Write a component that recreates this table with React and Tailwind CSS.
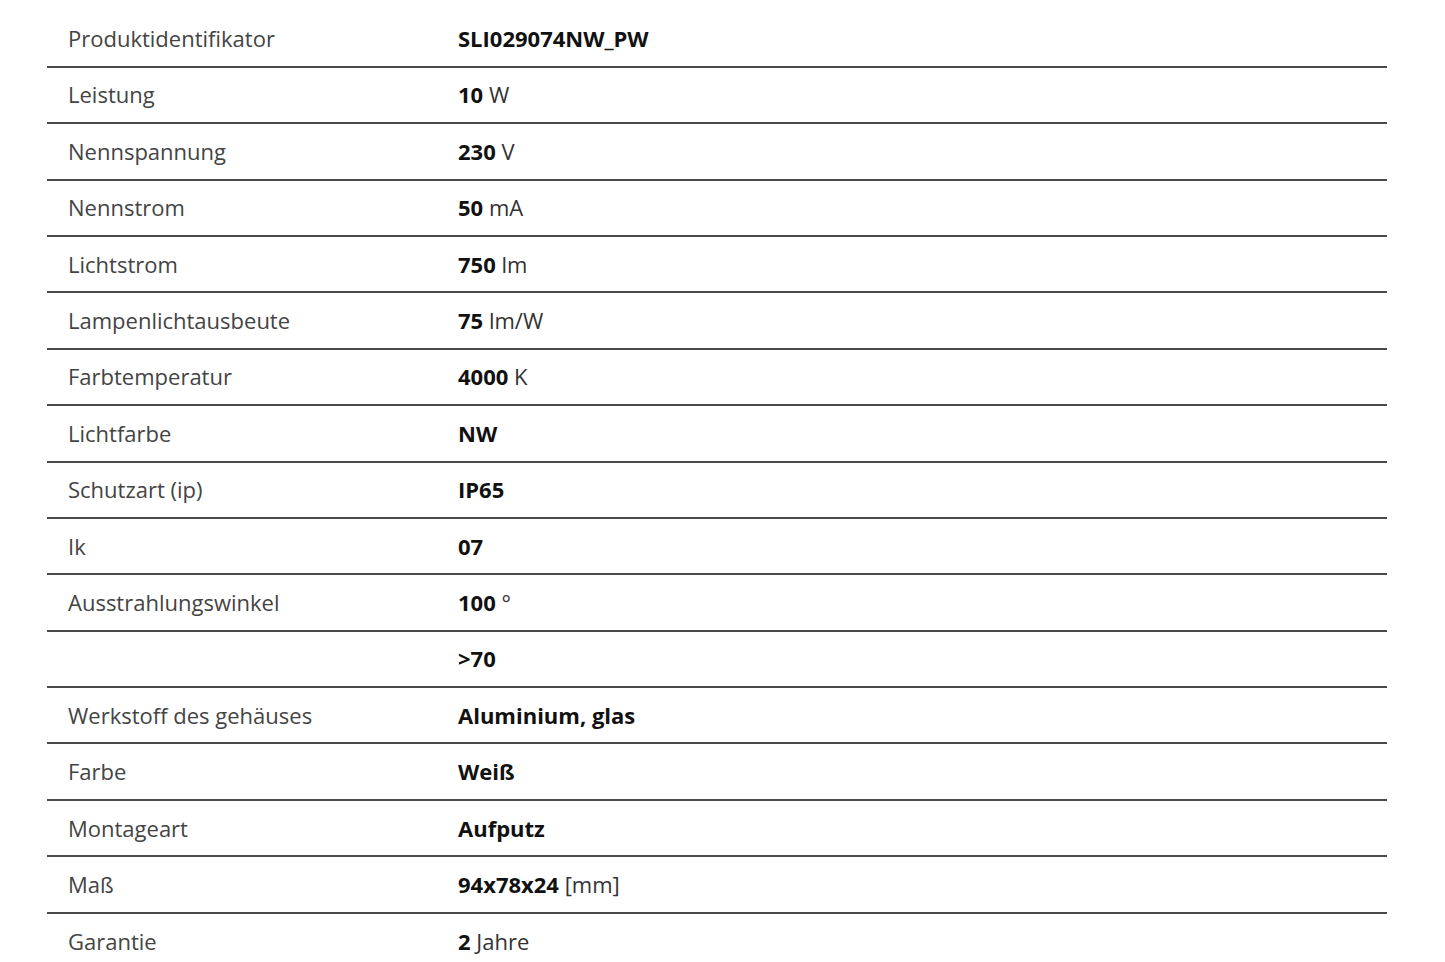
const rows = [
  ["Produktidentifikator", "SLI029074NW_PW", ""],
  ["Leistung", "10", "W"],
  ["Nennspannung", "230", "V"],
  ["Nennstrom", "50", "mA"],
  ["Lichtstrom", "750", "lm"],
  ["Lampenlichtausbeute", "75", "lm/W"],
  ["Farbtemperatur", "4000", "K"],
  ["Lichtfarbe", "NW", ""],
  ["Schutzart (ip)", "IP65", ""],
  ["Ik", "07", ""],
  ["Ausstrahlungswinkel", "100", "°"],
  ["", ">70", ""],
  ["Werkstoff des gehäuses", "Aluminium, glas", ""],
  ["Farbe", "Weiß", ""],
  ["Montageart", "Aufputz", ""],
  ["Maß", "94x78x24", "[mm]"],
  ["Garantie", "2", "Jahre"],
];

export default function App() {
  return (
    <div
      className="w-[1445px] h-[962px] overflow-hidden bg-white pt-[11.4px] px-[47px]"
      style={{ fontFamily: "'Open Sans', 'Noto Sans', sans-serif" }}
    >
      <div className="w-[1340px]">
        {rows.map(([label, value, unit], i) => (
          <div
            key={i}
            className={
              "flex items-center h-[56.4px] box-border text-[22px] " +
              (i < rows.length - 1 ? "border-b-2 border-[#4a4a4a]" : "")
            }
          >
            <div className="w-[411px] pl-[21px] text-[#444]">{label}</div>
            <div className="flex-1 text-[#111]">
              <span className="font-bold">{value}</span>
              {unit && <span className="text-[#333]"> {unit}</span>}
            </div>
          </div>
        ))}
      </div>
    </div>
  );
}
